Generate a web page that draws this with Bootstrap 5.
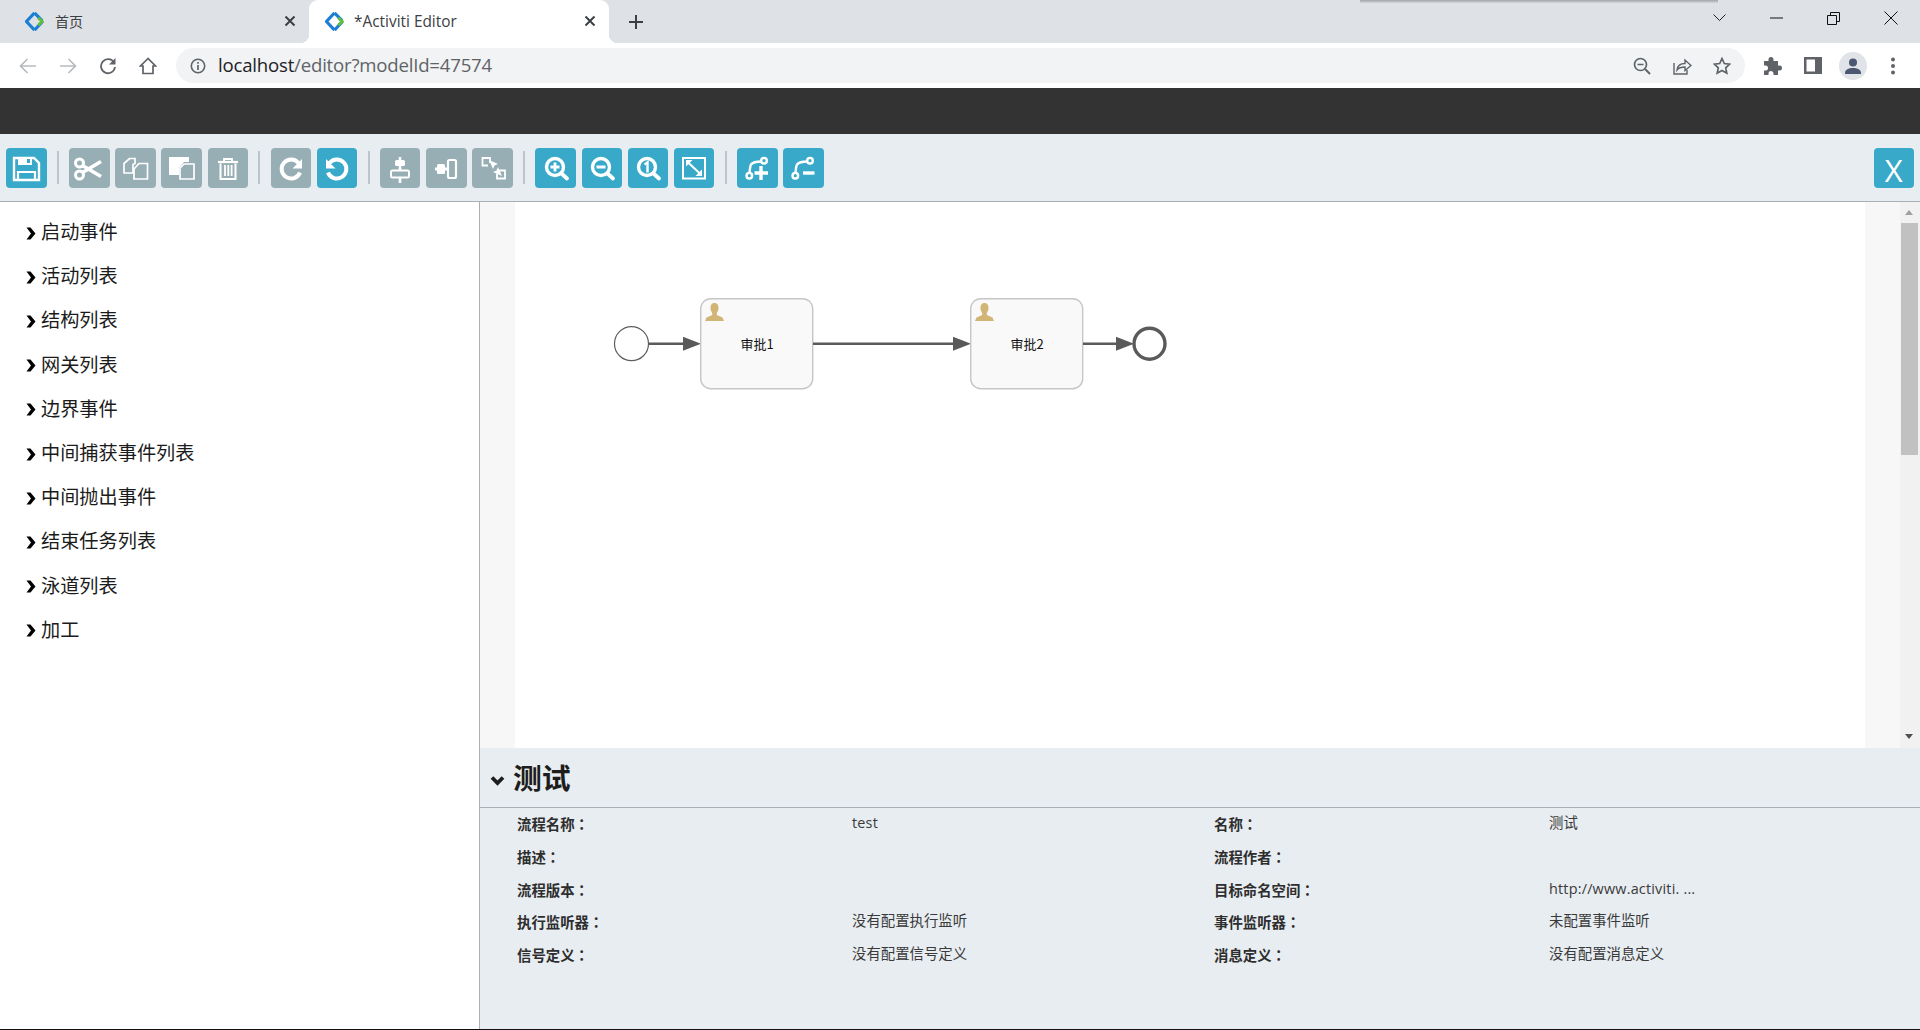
<!DOCTYPE html>
<html lang="zh-CN">
<head>
  <meta charset="UTF-8" />
  <title>*Activiti Editor</title>
  <link href="https://cdn.jsdelivr.net/npm/bootstrap@5.3.3/dist/css/bootstrap.min.css" rel="stylesheet"/>
  <style>
    html, body { height: 100%; }
    body { width: 1920px; height: 1030px; overflow: hidden; background: #fff; color: #222;
      font-family: "Noto Sans CJK SC", "Noto Sans", sans-serif; }

    /* browser chrome */
    .tabstrip { height: 43px; background: #dee1e6; position: relative; }
    .top-shadow { position: absolute; left: 1360px; top: 0; width: 358px; height: 3px; background: linear-gradient(#a2a5a9, #d3d6da); }
    .btab { height: 43px; display: flex; align-items: center; font-size: 14px; color: #3c4043; position: relative; }
    .btab-first { width: 309px; padding-left: 25px; }
    .btab-active { width: 300px; padding-left: 16px; background: #fff; border-radius: 9px 9px 0 0; color: #3c4043; font-family: "Open Sans", sans-serif; font-size: 15.4px; }
    .btab-active::before, .btab-active::after { content: ""; position: absolute; bottom: 0; width: 9px; height: 9px; }
    .btab-active::before { left: -9px; background: radial-gradient(circle at 0 0, transparent 9px, #fff 9.5px); }
    .btab-active::after { right: -9px; background: radial-gradient(circle at 100% 0, transparent 9px, #fff 9.5px); }
    .btab-title { margin-left: 10px; }
    .btab-first .btab-title { margin-left: 11px; }
    .btab-x { position: absolute; right: 13px; top: 15px; }
    .newtab { width: 54px; height: 43px; }
    .winbox { margin-right: 1px; }
    .winbtn { width: 57px; height: 36px; }
    .navrow { height: 45px; background: #fff; }
    .navicon { width: 40px; height: 35px; flex: none; }
    .omnibox { width: 1569px; height: 35px; margin-left: 8px; border-radius: 18px; background: #f1f3f4; padding: 0 3px 0 10px; flex: none; }
    .urltext { margin-left: 8px; margin-top: -2px; font-family: "Open Sans", sans-serif; font-size: 18.6px; letter-spacing: -.2px; color: #5f6368; line-height: 35px; white-space: nowrap; }
    .urltext b { font-weight: 400; color: #202124; }
    .navright { margin-left: 8px; }

    /* editor */
    .darkbar { height: 46px; background: #333; }
    .tbar { height: 68px; background: #e8edf1; border-bottom: 1px solid #a9aeb4; padding: 14px 6px 0; gap: 5.7px; }
    .tbtn { width: 40.5px; height: 40px; border-radius: 4px; flex: none; background: #97aeb4; display: flex; align-items: center; justify-content: center; }
    .tbtn svg { display: block; }
    .tbtn-on { background: #39a9ca; }
    .tsep { width: 2px; height: 33px; margin: 3px 4.6px 0; background: #bcc5cb; flex: none; }
    .tclose { margin-left: auto; color: #fff; font-family: "Open Sans", sans-serif; font-size: 31px; line-height: 40px; padding-top: 3px; }
    .mainrow { height: 827px; }
    .palette { width: 480px; flex: none; border-right: 1px solid #aab0b6; padding-top: 7px; background: #fff; }
    .palette-item { height: 44.2px; padding-left: 26px; font-size: 19.2px; color: #1b1b1b; line-height: 44px; gap: 5px; }
    .palette-item svg { margin-top: 4px; flex: none; }
    .rightcol { min-width: 0; width: 1440px; }
    .canvaswrap { height: 546px; background: #fff; }
    .gutter { width: 35px; flex: none; background: #f7f7f7; }
    .sheet { flex: 1 1 auto; background: #fff; }
    .vscroll { width: 20px; flex: none; background: #f1f1f1; position: relative; }
    .vthumb { position: absolute; left: 1px; right: 2px; top: 21px; height: 232px; background: #c1c1c1; }
    .varrow { position: absolute; left: 5px; width: 0; height: 0; border-left: 4.5px solid transparent; border-right: 4.5px solid transparent; }
    .varrow-up { top: 8px; border-bottom: 5px solid #9f9f9f; }
    .varrow-down { bottom: 9px; border-top: 5px solid #505050; }
    .diagram { display: block; }
    .diagram text { font-family: "Noto Sans CJK SC", sans-serif; font-size: 13px; fill: #111; text-anchor: middle; }

    .propswrap { height: 281px; background: #e8edf1; }
    .propshead { height: 60px; border-bottom: 1px solid #a9aeb4; padding-left: 10px; gap: 8px; }
    .propshead svg { margin-top: 6px; }
    .propstitle { font-size: 28.8px; font-weight: 700; color: #1d1d1d; line-height: 1; margin-top: -1px; }
    .propsgrid { display: grid; grid-template-columns: 335px 362px 335px 336px; grid-auto-rows: 32.8px; padding: 0 0 0 37px; font-size: 14.4px; color: #3a3a3a; }
    .plabel { font-weight: 700; line-height: 32.8px; color: #2e2e2e; }
    .pvalue { line-height: 32.8px; margin-top: -2px; }
    .pvalue-latin { font-family: "Open Sans", "Noto Sans CJK SC", sans-serif; letter-spacing: .2px; padding-top: 1px; }
    .blackline { height: 1px; background: #111; }
  </style>
</head>
<body>

  <svg width="0" height="0" class="d-block position-absolute">
    <defs>
      <symbol id="favicon" viewBox="0 0 20 20">
        <path d="M10 1 1.500 10 10 19" fill="none" stroke="#1b7fd4" stroke-width="3.400"/>
        <path d="M10 1 18 9" fill="none" stroke="#1b7fd4" stroke-width="3.400"/>
        <path d="M18.500 10 10 19" fill="none" stroke="#1b7fd4" stroke-width="3.400"/>
        <path d="M14 6 18 10 14 14" fill="none" stroke="#62bf3c" stroke-width="3.200"/>
      </symbol>
      <symbol id="tabx" viewBox="0 0 12 12">
        <path d="M1.500 1.500 10.500 10.500M10.500 1.500 1.500 10.500" stroke="#3c4043" stroke-width="2"/>
      </symbol>
      <symbol id="chev-right" viewBox="0 0 10 13">
        <path d="M.5.500H4.500L9.500 6.500 4.500 12.500H.5L5 6.500z" fill="#000"/>
      </symbol>
      <symbol id="task-user" viewBox="0 0 19 18">
        <path d="M9.500 0C6.600 0 5.500 2.200 5.500 4.800c0 2 .6 3.800 1.700 5.200v2L1.500 14.500 0 18h19l-1.500-3.500L11.800 12v-2c1.100-1.400 1.700-3.200 1.700-5.200C13.500 2.200 12.400 0 9.500 0z" fill="#d1b574"/>
      </symbol>
    </defs>
  </svg>

  <!-- browser tabs -->
  <div class="tabstrip d-flex">
    <div class="top-shadow"></div>
    <div class="btab btab-first">
      <svg width="19" height="19"><use href="#favicon"/></svg>
      <span class="btab-title">首页</span>
      <svg class="btab-x" width="12" height="12"><use href="#tabx"/></svg>
    </div>
    <div class="btab btab-active">
      <svg width="19" height="19"><use href="#favicon"/></svg>
      <span class="btab-title">*Activiti Editor</span>
      <svg class="btab-x" width="12" height="12"><use href="#tabx"/></svg>
    </div>
    <div class="newtab d-flex align-items-center justify-content-center ms-0">
      <svg width="14" height="14" viewBox="0 0 14 14"><path d="M7 0v14M0 7h14" stroke="#3c4043" stroke-width="2"/></svg>
    </div>
    <div class="winbox d-flex ms-auto">
      <div class="winbtn d-flex align-items-center justify-content-center"><svg width="13" height="8" viewBox="0 0 13 8"><path d="M.5.5 6.500 6.500 12.500.5" fill="none" stroke="#222" stroke-width="1"/></svg></div>
      <div class="winbtn d-flex align-items-center justify-content-center"><svg width="13" height="2" viewBox="0 0 13 2"><path d="M0 1h13" stroke="#111" stroke-width="1"/></svg></div>
      <div class="winbtn d-flex align-items-center justify-content-center"><svg width="13" height="13" viewBox="0 0 13 13"><path d="M.5 3.500h9v9h-9zM3.500 3.500v-3h9v9h-3" fill="none" stroke="#111" stroke-width="1"/></svg></div>
      <div class="winbtn d-flex align-items-center justify-content-center"><svg width="14" height="14" viewBox="0 0 14 14"><path d="M.5.5 13.500 13.500M13.500.5.5 13.500" stroke="#111" stroke-width="1"/></svg></div>
    </div>
  </div>

  <!-- address bar -->
  <div class="navrow d-flex align-items-center ps-2">
    <div class="navicon d-flex align-items-center justify-content-center"><svg width="18" height="16" viewBox="0 0 18 16"><path d="M17 8H2M8.500 1 1.500 8l7 7" fill="none" stroke="#b8bbbf" stroke-width="1.700"/></svg></div>
    <div class="navicon d-flex align-items-center justify-content-center"><svg width="18" height="16" viewBox="0 0 18 16"><path d="M1 8h15M9.500 1l7 7-7 7" fill="none" stroke="#b8bbbf" stroke-width="1.700"/></svg></div>
    <div class="navicon d-flex align-items-center justify-content-center"><svg width="18" height="18" viewBox="0 0 18 18"><path d="M15 5.500A7 7 0 1 0 16 10" fill="none" stroke="#5f6368" stroke-width="1.800"/><path d="M16.500 1v6.500H10z" fill="#5f6368"/></svg></div>
    <div class="navicon d-flex align-items-center justify-content-center"><svg width="18" height="18" viewBox="0 0 18 18"><path d="M9 1.500 1.500 9H4v7.500h10V9h2.500z" fill="none" stroke="#5f6368" stroke-width="1.700"/></svg></div>
    <div class="omnibox d-flex align-items-center">
      <svg class="flex-none" width="24" height="18" viewBox="0 0 24 18"><circle cx="12" cy="9" r="6.700" fill="none" stroke="#5f6368" stroke-width="1.600"/><path d="M12 8v5M12 5v1.700" stroke="#5f6368" stroke-width="1.700"/></svg>
      <span class="urltext flex-grow-1"><b>localhost</b>/editor?modelId=47574</span>
      <div class="navicon d-flex align-items-center justify-content-center"><svg width="18" height="18" viewBox="0 0 18 18"><circle cx="7.500" cy="7.500" r="6" fill="none" stroke="#5f6368" stroke-width="1.700"/><path d="M12 12l5 5" stroke="#5f6368" stroke-width="2"/><path d="M4.500 7.500h6" stroke="#5f6368" stroke-width="1.500"/></svg></div>
      <div class="navicon d-flex align-items-center justify-content-center"><svg width="19" height="18" viewBox="0 0 19 18"><path d="M1 6v11h13v-4" fill="none" stroke="#5f6368" stroke-width="1.400"/><path d="M4 13c.5-4 3.500-6.500 8-6.500V3l6 5.500-6 5v-3.500c-3.500 0-6.500 1-8 3z" fill="none" stroke="#5f6368" stroke-width="1.400"/></svg></div>
      <div class="navicon d-flex align-items-center justify-content-center"><svg width="18" height="18" viewBox="0 0 18 18"><path d="M9 1.500l2.300 5 5.400.6-4 3.700 1.100 5.400L9 13.500l-4.800 2.700 1.100-5.400-4-3.700 5.400-.6z" fill="none" stroke="#5f6368" stroke-width="1.700"/></svg></div>
    </div>
    <div class="navright d-flex align-items-center">
      <div class="navicon d-flex align-items-center justify-content-center"><svg width="18" height="18" viewBox="0 0 18 18"><path d="M7 0c1.500 0 2.500 1 2.500 2.500V4H14v4.500h1.500a2.500 2.500 0 0 1 0 5H14V18H9.500v-1.500a2.500 2.500 0 0 0-5 0V18H0v-4.500h1.500a2.500 2.500 0 0 0 0-5H0V4h4.500V2.500C4.500 1 5.500 0 7 0z" fill="#5f6368"/></svg></div>
      <div class="navicon d-flex align-items-center justify-content-center"><svg width="18" height="17" viewBox="0 0 18 17"><path d="M0 0h18v17H0z" fill="#5f6368"/><path d="M2.500 2.500h8.500v12H2.500z" fill="#fff"/></svg></div>
      <div class="navicon d-flex align-items-center justify-content-center"><svg width="28" height="28" viewBox="0 0 28 28"><circle cx="14" cy="14" r="14" fill="#e0e3e8"/><circle cx="14" cy="10.500" r="4" fill="#4a5770"/><path d="M6 21c0-3.500 3.500-5 8-5s8 1.500 8 5v1H6z" fill="#4a5770"/></svg></div>
      <div class="navicon d-flex align-items-center justify-content-center"><svg width="6" height="18" viewBox="0 0 6 18"><circle cx="3" cy="2.500" r="2" fill="#5f6368"/><circle cx="3" cy="9" r="2" fill="#5f6368"/><circle cx="3" cy="15.500" r="2" fill="#5f6368"/></svg></div>
    </div>
  </div>

  <div class="darkbar"></div>

  <!-- toolbar -->
  <div class="tbar d-flex">
    <div class="tbtn tbtn-on"><svg width="40" height="40" viewBox="0 0 40 40"><path d="M8 10h20l5 5v17H8z" fill="none" stroke="#fff" stroke-width="2.400"/><path d="M12 9h14v8H12z" fill="#fff"/><path d="M21 11h3v4h-3z" fill="#39a9ca"/><path d="M12 24h17v8H12z" fill="none" stroke="#fff" stroke-width="2.200"/></svg></div>
    <div class="tsep"></div>
    <div class="tbtn"><svg width="40" height="40" viewBox="0 0 40 40"><g fill="none" stroke="#fff" stroke-width="3"><circle cx="10.500" cy="15" r="4"/><circle cx="10.500" cy="27" r="4"/></g><path d="M13.500 17.500 32 28.500M13.500 24.500 32 13.500" stroke="#fff" stroke-width="3.600"/></svg></div>
    <div class="tbtn"><svg width="40" height="40" viewBox="0 0 40 40"><g fill="none" stroke="#fff" stroke-width="1.700"><path d="M13.500 10.500h5.500v5l-2 1v8.500h-9v-9.500z"/><path d="M23 15.500h8.500v15.500H18V21z"/></g></svg></div>
    <div class="tbtn"><svg width="40" height="40" viewBox="0 0 40 40"><path d="M7 9h20v5h-5l-5 6v7H7z" fill="#fff"/><path d="M22 16h10v15H18V20z" fill="none" stroke="#fff" stroke-width="1.700"/></svg></div>
    <div class="tbtn"><svg width="40" height="40" viewBox="0 0 40 40"><path d="M10 14h20" stroke="#fff" stroke-width="2.200"/><path d="M16 14v-3h8v3" fill="none" stroke="#fff" stroke-width="1.800"/><path d="M12.500 15.500v15.500h15V15.500" fill="none" stroke="#fff" stroke-width="2"/><path d="M17 17v11M20.300 17v11M23.600 17v11" stroke="#fff" stroke-width="1.800"/></svg></div>
    <div class="tsep"></div>
    <div class="tbtn"><svg width="40" height="40" viewBox="0 0 40 40"><path d="M27.500 15a9.500 9.500 0 1 0 1.500 9.500" fill="none" stroke="#fff" stroke-width="4"/><path d="M31 11v9.500h-9.500z" fill="#fff"/></svg></div>
    <div class="tbtn tbtn-on"><svg width="40" height="40" viewBox="0 0 40 40"><path d="M12.500 15a9.500 9.500 0 1 1-1.500 9.500" fill="none" stroke="#fff" stroke-width="4"/><path d="M9 11v9.500h9.500z" fill="#fff"/></svg></div>
    <div class="tsep"></div>
    <div class="tbtn"><svg width="40" height="40" viewBox="0 0 40 40"><path d="M20 9v26" stroke="#fff" stroke-width="2.600"/><rect x="15" y="12" width="10" height="6" rx="1.500" fill="#fff"/><rect x="11" y="22.500" width="18" height="7" rx="1.500" fill="#97aeb4" stroke="#fff" stroke-width="2"/></svg></div>
    <div class="tbtn"><svg width="40" height="40" viewBox="0 0 40 40"><path d="M9 21h12" stroke="#fff" stroke-width="3"/><rect x="11" y="16" width="8" height="10" rx="1.500" fill="#fff"/><rect x="22" y="12" width="8" height="18" rx="1.500" fill="#97aeb4" stroke="#fff" stroke-width="2.200"/></svg></div>
    <div class="tbtn"><svg width="40" height="40" viewBox="0 0 40 40"><g fill="none" stroke="#fff" stroke-width="1.800"><path d="M15 17.500H9.500v-7.500H17v5"/><path d="M26 22.500h6v8h-8v-5"/></g><path d="M16 12l4 9 1.500-3.500 3.500-1.500z" fill="#fff"/><path d="M29 29l-4-9-1.500 3.500-3.500 1.500z" fill="#fff" transform="translate(0 -1)"/></svg></div>
    <div class="tsep"></div>
    <div class="tbtn tbtn-on"><svg width="40" height="40" viewBox="0 0 40 40"><circle cx="19" cy="19" r="8.500" fill="none" stroke="#fff" stroke-width="3.400"/><path d="M25.500 25.500l5.500 5" stroke="#fff" stroke-width="3.800" stroke-linecap="round"/><path d="M19 14.500v9M14.500 19h9" stroke="#fff" stroke-width="2.800"/></svg></div>
    <div class="tbtn tbtn-on"><svg width="40" height="40" viewBox="0 0 40 40"><circle cx="19" cy="19" r="8.500" fill="none" stroke="#fff" stroke-width="3.400"/><path d="M25.500 25.500l5.500 5" stroke="#fff" stroke-width="3.800" stroke-linecap="round"/><path d="M14.500 19h9" stroke="#fff" stroke-width="3"/></svg></div>
    <div class="tbtn tbtn-on"><svg width="40" height="40" viewBox="0 0 40 40"><circle cx="19" cy="19" r="8.500" fill="none" stroke="#fff" stroke-width="3.400"/><path d="M25.500 25.500l5.500 5" stroke="#fff" stroke-width="3.800" stroke-linecap="round"/><path d="M16.500 16.500l3-2v10" fill="none" stroke="#fff" stroke-width="2.400"/></svg></div>
    <div class="tbtn tbtn-on"><svg width="40" height="40" viewBox="0 0 40 40"><rect x="9" y="10" width="22" height="20.500" fill="none" stroke="#fff" stroke-width="2"/><path d="M13 13.500l14 13" stroke="#fff" stroke-width="2"/><path d="M12 12h6.500L12 18.500zM28 28h-6.500l6.500-6.500z" fill="#fff"/></svg></div>
    <div class="tsep"></div>
    <div class="tbtn tbtn-on"><svg width="40" height="40" viewBox="0 0 40 40"><g fill="none" stroke="#fff" stroke-width="2.400"><circle cx="27" cy="12.700" r="2.800"/><circle cx="12.300" cy="27.700" r="2.800"/><path d="M24.500 13.500c-7 0-9 1-10.500 3-1 2-1.200 5-1.500 8.500"/></g><path d="M24 18v14M17.500 25h13.500" stroke="#fff" stroke-width="3.400"/></svg></div>
    <div class="tbtn tbtn-on"><svg width="40" height="40" viewBox="0 0 40 40"><g fill="none" stroke="#fff" stroke-width="2.400"><circle cx="27" cy="12.700" r="2.800"/><circle cx="12.300" cy="27.700" r="2.800"/><path d="M24.500 13.500c-7 0-9 1-10.500 3-1 2-1.200 5-1.500 8.500"/></g><path d="M20 25h11.500" stroke="#fff" stroke-width="3.400"/></svg></div>
    <div class="tbtn tbtn-on tclose">X</div>
  </div>

  <div class="mainrow d-flex">
    <!-- shape palette -->
    <div class="palette">
      <div class="palette-item d-flex align-items-center"><svg width="10" height="13"><use href="#chev-right"/></svg><span>启动事件</span></div>
      <div class="palette-item d-flex align-items-center"><svg width="10" height="13"><use href="#chev-right"/></svg><span>活动列表</span></div>
      <div class="palette-item d-flex align-items-center"><svg width="10" height="13"><use href="#chev-right"/></svg><span>结构列表</span></div>
      <div class="palette-item d-flex align-items-center"><svg width="10" height="13"><use href="#chev-right"/></svg><span>网关列表</span></div>
      <div class="palette-item d-flex align-items-center"><svg width="10" height="13"><use href="#chev-right"/></svg><span>边界事件</span></div>
      <div class="palette-item d-flex align-items-center"><svg width="10" height="13"><use href="#chev-right"/></svg><span>中间捕获事件列表</span></div>
      <div class="palette-item d-flex align-items-center"><svg width="10" height="13"><use href="#chev-right"/></svg><span>中间抛出事件</span></div>
      <div class="palette-item d-flex align-items-center"><svg width="10" height="13"><use href="#chev-right"/></svg><span>结束任务列表</span></div>
      <div class="palette-item d-flex align-items-center"><svg width="10" height="13"><use href="#chev-right"/></svg><span>泳道列表</span></div>
      <div class="palette-item d-flex align-items-center"><svg width="10" height="13"><use href="#chev-right"/></svg><span>加工</span></div>
    </div>

    <div class="rightcol d-flex flex-column">
      <!-- canvas -->
      <div class="canvaswrap d-flex">
        <div class="gutter"></div>
        <div class="sheet">
          <!-- svg origin is page x 515, y 202 -->
          <svg class="diagram" width="700" height="240" viewBox="515 202 700 240">
            <circle cx="631.500" cy="343.700" r="17" fill="#fff" stroke="#5e5e5e" stroke-width="1.200"/>
            <path d="M648.500 343.700H686" stroke="#5a5a5a" stroke-width="2.500"/>
            <path d="M683 336.700 701 343.700 683 350.700z" fill="#5a5a5a"/>
            <rect x="700.700" y="298.700" width="112" height="90" rx="10" fill="#f9f9f9" stroke="#c6c6c6" stroke-width="1.400"/>
            <use href="#task-user" x="705" y="303" width="19" height="18"/>
            <text x="757" y="349">审批1</text>
            <path d="M813 343.700H956" stroke="#5a5a5a" stroke-width="2.500"/>
            <path d="M953 336.700 971 343.700 953 350.700z" fill="#5a5a5a"/>
            <rect x="970.700" y="298.700" width="112" height="90" rx="10" fill="#f9f9f9" stroke="#c6c6c6" stroke-width="1.400"/>
            <use href="#task-user" x="975" y="303" width="19" height="18"/>
            <text x="1027" y="349">审批2</text>
            <path d="M1083 343.700H1119" stroke="#5a5a5a" stroke-width="2.500"/>
            <path d="M1116 336.700 1134 343.700 1116 350.700z" fill="#5a5a5a"/>
            <circle cx="1149.500" cy="343.700" r="15.500" fill="#fff" stroke="#5a5a5a" stroke-width="3.400"/>
          </svg>
        </div>
        <div class="gutter"></div>
        <div class="vscroll">
          <div class="varrow varrow-up"></div>
          <div class="vthumb"></div>
          <div class="varrow varrow-down"></div>
        </div>
      </div>

      <!-- properties -->
      <div class="propswrap flex-grow-1">
        <div class="propshead d-flex align-items-center">
          <svg width="15" height="11" viewBox="0 0 15 11"><path d="M2 2.500 7.500 8 13 2.500" fill="none" stroke="#1d1d1d" stroke-width="3.800"/></svg>
          <span class="propstitle">测试</span>
        </div>
        <div class="propsgrid">
          <div class="plabel">流程名称<span lang="zh-TW">：</span></div><div class="pvalue pvalue-latin">test</div><div class="plabel">名称<span lang="zh-TW">：</span></div><div class="pvalue">测试</div>
          <div class="plabel">描述<span lang="zh-TW">：</span></div><div class="pvalue"></div><div class="plabel">流程作者<span lang="zh-TW">：</span></div><div class="pvalue"></div>
          <div class="plabel">流程版本<span lang="zh-TW">：</span></div><div class="pvalue"></div><div class="plabel">目标命名空间<span lang="zh-TW">：</span></div><div class="pvalue pvalue-latin">http://www.activiti. ...</div>
          <div class="plabel">执行监听器<span lang="zh-TW">：</span></div><div class="pvalue">没有配置执行监听</div><div class="plabel">事件监听器<span lang="zh-TW">：</span></div><div class="pvalue">未配置事件监听</div>
          <div class="plabel">信号定义<span lang="zh-TW">：</span></div><div class="pvalue">没有配置信号定义</div><div class="plabel">消息定义<span lang="zh-TW">：</span></div><div class="pvalue">没有配置消息定义</div>
        </div>
      </div>
    </div>
  </div>
  <div class="blackline"></div>

  <script src="https://cdn.jsdelivr.net/npm/bootstrap@5.3.3/dist/js/bootstrap.bundle.min.js"></script>
</body>
</html>
